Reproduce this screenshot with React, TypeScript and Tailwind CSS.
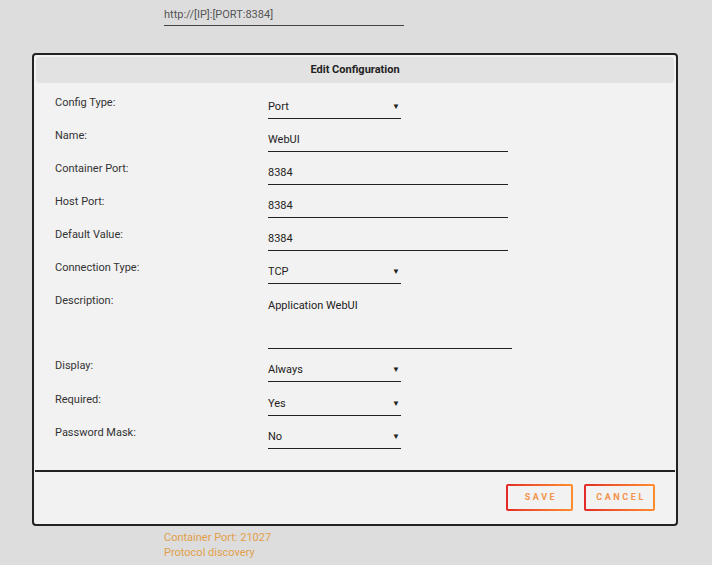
const FONT = { fontFamily: 'Roboto, "Liberation Sans", sans-serif' };

type Row = { label: string; value: string; kind: 'select' | 'input' | 'text' };

const ROWS: Row[] = [
    { label: 'Config Type:', value: 'Port', kind: 'select' },
    { label: 'Name:', value: 'WebUI', kind: 'input' },
    { label: 'Container Port:', value: '8384', kind: 'input' },
    { label: 'Host Port:', value: '8384', kind: 'input' },
    { label: 'Default Value:', value: '8384', kind: 'input' },
    { label: 'Connection Type:', value: 'TCP', kind: 'select' },
    { label: 'Description:', value: 'Application WebUI', kind: 'text' },
    { label: 'Display:', value: 'Always', kind: 'select' },
    { label: 'Required:', value: 'Yes', kind: 'select' },
    { label: 'Password Mask:', value: 'No', kind: 'select' },
];

function Field({ row }: { row: Row }) {
    if (row.kind === 'select') {
        return (
            <div className="w-[133px] h-[24px] border-b border-[#222] flex justify-between pt-[4px] pr-[1px] leading-[16px] text-[#222]">
                <span>{row.value}</span>
                <span className="text-[8px]">▼</span>
            </div>
        );
    }
    if (row.kind === 'text') {
        return (
            <div className="w-[244px] h-[56px] border-b border-[#222] pt-[5px] leading-[16px] text-[#222]">
                {row.value}
            </div>
        );
    }
    return (
        <div className="w-[240px] h-[24px] border-b border-[#222] pt-[4px] leading-[16px] text-[#222]">
            {row.value}
        </div>
    );
}

export default function App() {
    return (
        <div className="w-[712px] h-[565px] bg-[#dddddd] text-[11px] text-[#333]" style={FONT}>
            <div className="pl-[164px] pt-[7px]">
                <div className="w-[240px] h-[19px] border-b border-[#444] text-[#555] leading-[16px]">
                    http://[IP]:[PORT:8384]
                </div>
            </div>

            <div className="ml-[32px] mt-[27px] w-[646px] h-[473px] border-2 border-[#222] rounded-[4px] bg-[#f2f2f2] flex flex-col">
                <div className="mx-[2px] mt-[2px] h-[26px] bg-[#e2e2e2] rounded-[4px] flex items-center justify-center font-bold text-[#222]">
                    Edit Configuration
                </div>

                <div className="pl-[21px] pt-[12px] flex flex-col gap-[9px] grow">
                    {ROWS.map(row => (
                        <div key={row.label} className={`flex ${row.label === 'Display:' ? 'mb-[1px]' : ''}`}>
                            <div className="w-[213px] leading-[16px]">{row.label}</div>
                            <Field row={row} />
                        </div>
                    ))}
                </div>

                <div className="mx-[1px] border-t-2 border-[#222] h-[54px] flex items-start justify-end gap-[11px] pt-[12px] pr-[20px]">
                    {[
                        { t: 'SAVE', w: 'w-[67px]' },
                        { t: 'CANCEL', w: 'w-[71px]' },
                    ].map(b => (
                        <div key={b.t} className={`${b.w} h-[27px] rounded-[2px] p-[2px] bg-gradient-to-r from-[#e22828] to-[#ff8c2f]`}>
                            <div className="h-full bg-[#f2f2f2] flex items-center justify-center pl-[3px] text-[9px] font-bold tracking-[2.6px] text-[#f5934a]">
                                {b.t}
                            </div>
                        </div>
                    ))}
                </div>
            </div>

            <div className="pl-[164px] pt-[4px] text-[#e1a04b] leading-[15px]">
                <div>Container Port: 21027</div>
                <div>Protocol discovery</div>
            </div>
        </div>
    );
}
